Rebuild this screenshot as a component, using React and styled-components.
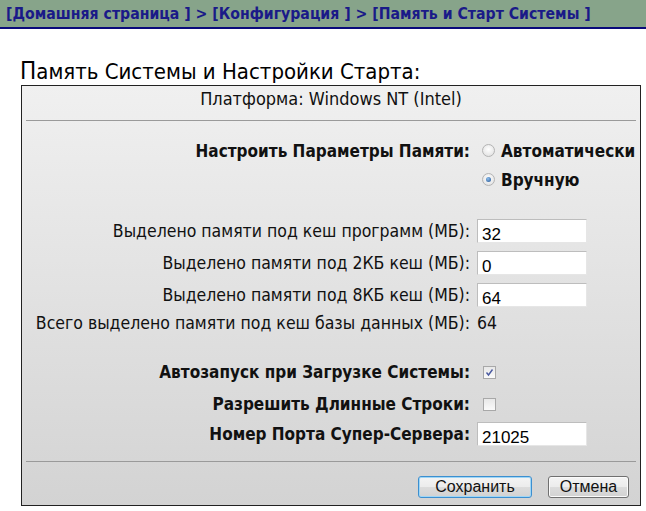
import React from 'react';
import styled, { createGlobalStyle } from 'styled-components';

const GlobalStyle = createGlobalStyle`
  html, body {
    margin: 0;
    padding: 0;
    background: #fff;
  }
  body {
    font-family: "DejaVu Sans Condensed", "DejaVu Sans", sans-serif;
    color: #111;
  }
`;

const Page = styled.div`
  width: 646px;
  height: 511px;
  overflow: hidden;
`;

const Breadcrumbs = styled.div`
  height: 27px;
  background: #87a48a;
  border-bottom: 2px solid #0a0a7a;
  display: flex;
  align-items: center;
  padding-left: 6px;
  font-size: 15.7px;
  font-weight: bold;
  color: #1a1a88;
  white-space: nowrap;
`;

const Title = styled.h1`
  margin: 28px 0 0 20px;
  height: 28px;
  font-size: 22px;
  font-weight: normal;
  line-height: 28px;
  color: #000;
  &::first-letter {
    font-size: 24px;
  }
`;

const Panel = styled.div`
  margin: 0 5px 0 21px;
  border: 1px solid #222;
  background: linear-gradient(#f0f0f0, #d3d3d3);
  display: flex;
  flex-direction: column;
  height: 421px;
  box-sizing: border-box;
`;

const Platform = styled.div`
  height: 26px;
  line-height: 26px;
  text-align: center;
  font-size: 18px;
`;

const Divider = styled.div`
  margin: ${(p) => p.top}px 4px 0 4px;
  height: 1px;
  background: #9a9a9a;
`;

const Row = styled.div`
  display: grid;
  grid-template-columns: 448px 1fr;
  column-gap: 7px;
  align-items: center;
  height: ${(p) => p.h}px;
  margin-top: ${(p) => p.top || 0}px;
  font-size: 17.5px;
  white-space: nowrap;
`;

const Label = styled.div`
  text-align: right;
  font-weight: ${(p) => (p.bold ? 'bold' : 'normal')};
  font-size: ${(p) => (p.bold ? '17px' : '17.5px')};
`;

const Value = styled.div`
  display: flex;
  align-items: center;
  gap: 6px;
  font-weight: ${(p) => (p.bold ? 'bold' : 'normal')};
  font-size: ${(p) => (p.bold ? '17px' : '17.5px')};
`;

const Radio = styled.span`
  width: 11px;
  height: 11px;
  margin-left: 5px;
  border-radius: 50%;
  border: 1px solid #b4b4b4;
  background: radial-gradient(circle at 50% 40%, #fff, #dcdcdc);
  display: inline-flex;
  align-items: center;
  justify-content: center;
  flex: none;
  &::after {
    content: '';
    width: 5px;
    height: 5px;
    border-radius: 50%;
    background: ${(p) => (p.checked ? 'radial-gradient(circle at 40% 35%, #8fc0ee, #1f4f8f)' : 'transparent')};
  }
`;

const Check = styled.span`
  width: 11px;
  height: 11px;
  margin-left: 6px;
  border: 1px solid #a8a8a8;
  background: linear-gradient(#e8e8e8, #fafafa);
  display: inline-flex;
  align-items: center;
  justify-content: center;
  flex: none;
`;

const TextBox = styled.div`
  width: 110px;
  height: 24px;
  box-sizing: border-box;
  background: #fff;
  border: 1px solid;
  border-color: #bdbdbd #e6e6e6 #e6e6e6 #bdbdbd;
  padding: 6px 0 0 4px;
  font-family: "Liberation Sans", Arial, sans-serif;
  font-size: 17px;
  font-weight: normal;
  line-height: 18px;
  color: #000;
`;

const Buttons = styled.div`
  display: flex;
  justify-content: flex-end;
  gap: 16px;
  margin-top: 14px;
  padding-right: 11px;
`;

const Button = styled.button`
  height: 22px;
  width: ${(p) => p.w}px;
  padding: 0;
  font-family: "Liberation Sans", Arial, sans-serif;
  font-size: 16px;
  color: #111;
  border-radius: 3px;
  border: 1px solid ${(p) => (p.primary ? '#3c8fd0' : '#707070')};
  box-shadow: ${(p) => (p.primary ? 'inset 0 0 0 1px #9fd6f6' : 'inset 0 0 0 1px #fbfbfb')};
  background: linear-gradient(#f4f4f4 0%, #ececec 50%, #dcdcdc 51%, #d2d2d2 100%);
`;

const CheckMark = () => (
  <svg width="9" height="9" viewBox="0 0 9 9">
    <path d="M1.5 4.5 L3.5 7 L7.5 1.5" fill="none" stroke="#4a5aa0" strokeWidth="1.4" />
  </svg>
);

const App = () => (
  <Page>
    <GlobalStyle />
    <Breadcrumbs>
      [Домашняя страница&nbsp;] &gt; [Конфигурация&nbsp;] &gt; [Память и Старт Системы&nbsp;]
    </Breadcrumbs>
    <Title>Память Системы и Настройки Старта:</Title>
    <Panel>
      <Platform>Платформа: Windows NT (Intel)</Platform>
      <Divider top={8} />
      <Row h={29} top={15}>
        <Label bold>Настроить Параметры Памяти:</Label>
        <Value bold>
          <Radio />
          Автоматически
        </Value>
      </Row>
      <Row h={29}>
        <Label />
        <Value bold>
          <Radio checked />
          Вручную
        </Value>
      </Row>
      <Row h={32} top={21}>
        <Label>Выделено памяти под кеш программ (МБ):</Label>
        <TextBox>32</TextBox>
      </Row>
      <Row h={32}>
        <Label>Выделено памяти под 2КБ кеш (МБ):</Label>
        <TextBox>0</TextBox>
      </Row>
      <Row h={32}>
        <Label>Выделено памяти под 8КБ кеш (МБ):</Label>
        <TextBox>64</TextBox>
      </Row>
      <Row h={24}>
        <Label>Всего выделено памяти под кеш базы данных (МБ):</Label>
        <Value>64</Value>
      </Row>
      <Row h={32} top={21}>
        <Label bold>Автозапуск при Загрузке Системы:</Label>
        <Value>
          <Check>
            <CheckMark />
          </Check>
        </Value>
      </Row>
      <Row h={32}>
        <Label bold>Разрешить Длинные Строки:</Label>
        <Value>
          <Check />
        </Value>
      </Row>
      <Row h={28}>
        <Label bold>Номер Порта Супер-Сервера:</Label>
        <TextBox>21025</TextBox>
      </Row>
      <Divider top={13} />
      <Buttons>
        <Button primary w={114}>Сохранить</Button>
        <Button w={81}>Отмена</Button>
      </Buttons>
    </Panel>
  </Page>
);

export default App;
